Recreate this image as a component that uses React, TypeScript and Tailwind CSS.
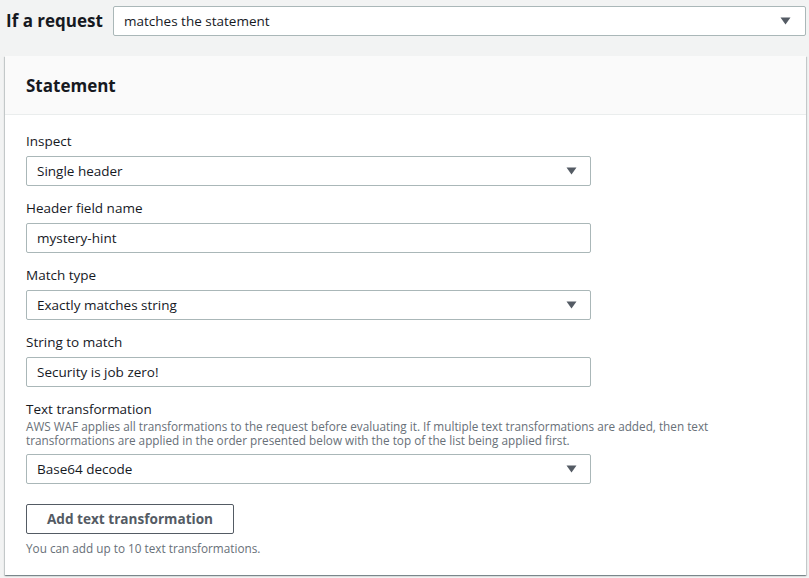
import { ReactNode } from 'react'

function Caret() {
  return (
    <svg width="11" height="8" viewBox="0 0 11 8" className="shrink-0">
      <path d="M0.5 0.5 H10.5 L5.5 7.5 Z" fill="#545b64" />
    </svg>
  )
}

function Select({ value, className = '' }: { value: string; className?: string }) {
  return (
    <div className={`h-[30px] bg-white border border-[#aab7b8] rounded-[2px] flex items-center justify-between pl-[10px] pr-[13px] text-[13.5px] text-[#16191f] ${className}`}>
      <span>{value}</span>
      <Caret />
    </div>
  )
}

function Input({ value }: { value: string }) {
  return (
    <div className="h-[30px] w-[565px] bg-white border border-[#aab7b8] rounded-[2px] flex items-center pl-[10px] text-[13.5px] text-[#16191f]">
      {value}
    </div>
  )
}

function Field({ label, desc, children }: { label: string; desc?: ReactNode; children: ReactNode }) {
  return (
    <div className="flex flex-col">
      <label className="text-[13.5px] leading-[22px] text-[#16191f]">{label}</label>
      {desc && <p className="text-[11.75px] leading-[14px] text-[#687078] mb-[3px] -mt-[1px]">{desc}</p>}
      <div className="mt-[4px]">{children}</div>
    </div>
  )
}

export default function App() {
  return (
    <div className="w-[809px] h-[578px] bg-[#f2f3f3] overflow-hidden" style={{ fontFamily: '"Open Sans", "Noto Sans", Arial, sans-serif' }}>
      {/* Condition row */}
      <div className="flex items-center pt-[6px] pl-[6px] pr-[3px]">
        <div className="text-[17px] font-bold text-[#16191f] w-[107px]">If a request</div>
        <Select value="matches the statement" className="flex-1 !pr-[14px]" />
      </div>

      {/* Statement card */}
      <div className="mt-[20px] ml-[5px] mr-[3px] h-[519px] bg-white shadow-[0_1px_1px_0_rgba(0,28,36,0.3),1px_1px_1px_0_rgba(0,28,36,0.15),-1px_1px_1px_0_rgba(0,28,36,0.15)]">
        <div className="h-[59px] bg-[#fafafa] border-b border-[#eaeded] flex items-center pl-[21px] pt-[1px]">
          <h2 className="text-[17px] font-bold text-[#16191f]">Statement</h2>
        </div>

        <div className="pl-[21px] pt-[15px] flex flex-col gap-[11px]">
          <Field label="Inspect">
            <Select value="Single header" className="w-[565px]" />
          </Field>
          <Field label="Header field name">
            <Input value="mystery-hint" />
          </Field>
          <Field label="Match type">
            <Select value="Exactly matches string" className="w-[565px]" />
          </Field>
          <Field label="String to match">
            <Input value="Security is job zero!" />
          </Field>
          <Field
            label="Text transformation"
            desc={
              <>
                AWS WAF applies all transformations to the request before evaluating it. If multiple text transformations are added, then text
                <br />
                transformations are applied in the order presented below with the top of the list being applied first.
              </>
            }
          >
            <Select value="Base64 decode" className="w-[565px]" />
          </Field>

          <div className="flex flex-col items-start mt-[9px]">
            <button className="h-[30px] w-[208px] border border-[#545b64] rounded-[2px] bg-white text-[13.6px] font-bold text-[#545b64]">
              Add text transformation
            </button>
            <p className="text-[11.75px] text-[#687078] mt-[6px]">You can add up to 10 text transformations.</p>
          </div>
        </div>
      </div>
    </div>
  )
}
